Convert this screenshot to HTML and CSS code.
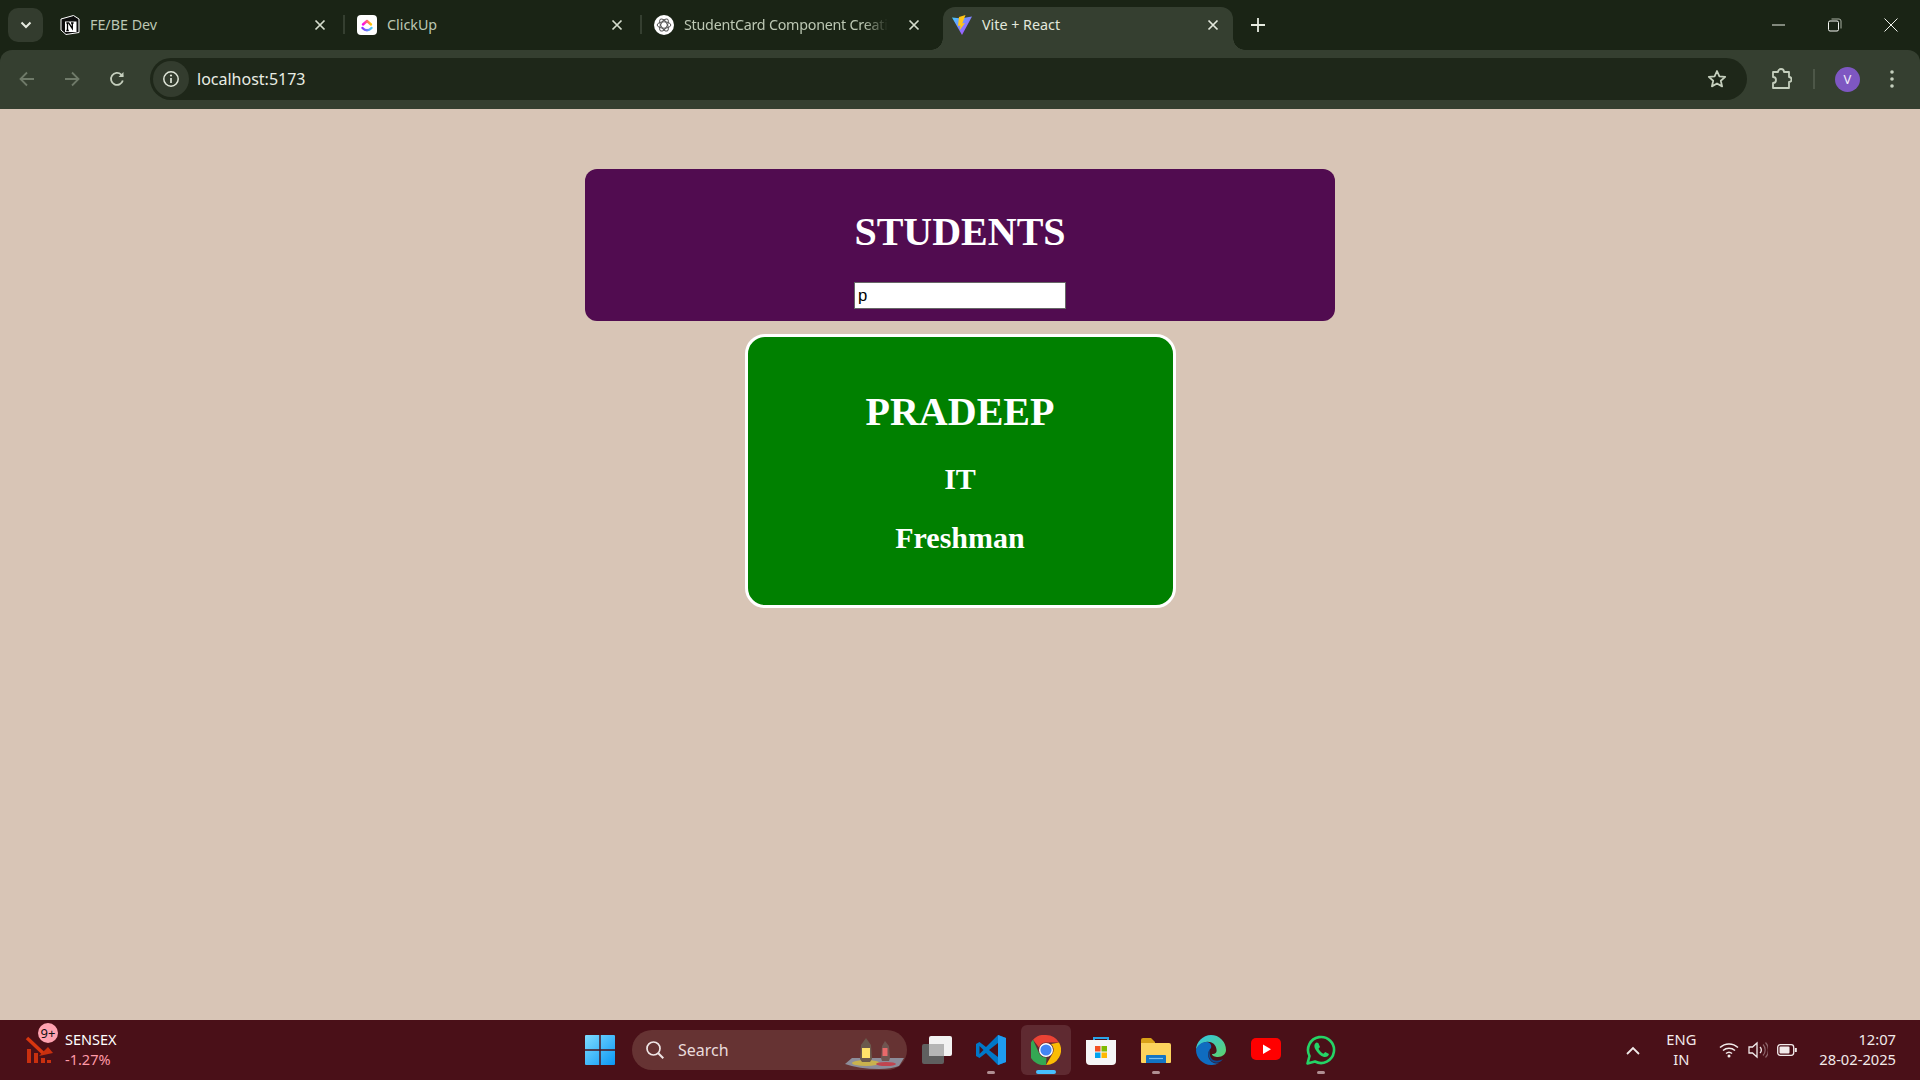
FILE: index.html
```html
<!DOCTYPE html>
<html lang="en">
<head>
<meta charset="utf-8">
<title>Vite + React</title>
<link rel="stylesheet" href="styles.css">
</head>
<body>
<div class="screen">
  <div class="tabstrip">
    <button class="tab-menu"><svg width="12" height="8" viewBox="0 0 12 8"><path d="M1.500 1.500 6 6l4.500-4.500" fill="none" stroke="#e6ebe0" stroke-width="2"/></svg></button>
    <div class="tab">
      <svg class="fav" viewBox="0 0 20 20"><path d="M1 4 13.500.5 19 4v13.500L6 19.500 1 15z" fill="#0c0c0c" stroke="#fff" stroke-width="1"/><path d="M5 6.500h11.500V17H5z" fill="#fff"/><path d="M7.500 15.500v-7.500h1.200l3.600 5.500V8M6.300 8h2.500M11 8h2.600M6.300 15.500h2.500" fill="none" stroke="#000" stroke-width="1.300"/></svg>
      <span class="tab-title">FE/BE Dev</span>
      <svg class="x" viewBox="0 0 12 12"><path d="M1.500 1.500l9 9m0-9l-9 9" stroke="#d5dccd" stroke-width="1.700"/></svg>
    </div>
    <i class="tab-sep"></i>
    <div class="tab">
      <svg class="fav" viewBox="0 0 20 20"><defs><linearGradient id="cu1" x1="0" y1="0" x2="1" y2="0"><stop offset="0" stop-color="#ff02f0"/><stop offset="1" stop-color="#ffc800"/></linearGradient><linearGradient id="cu2" x1="0" y1="0" x2="1" y2="0"><stop offset="0" stop-color="#8930fd"/><stop offset="1" stop-color="#49ccf9"/></linearGradient></defs><rect width="20" height="20" rx="4" fill="#fff"/><path d="M6 9.500 10 6l4 3.500" fill="none" stroke="url(#cu1)" stroke-width="2.400" stroke-linecap="round" stroke-linejoin="round"/><path d="M5.500 13c2.800 3 6.200 3 9 0" fill="none" stroke="url(#cu2)" stroke-width="2.400" stroke-linecap="round"/></svg>
      <span class="tab-title">ClickUp</span>
      <svg class="x" viewBox="0 0 12 12"><path d="M1.500 1.500l9 9m0-9l-9 9" stroke="#d5dccd" stroke-width="1.700"/></svg>
    </div>
    <i class="tab-sep"></i>
    <div class="tab">
      <svg class="fav" viewBox="0 0 20 20"><circle cx="10" cy="10" r="10" fill="#fff"/><g fill="none" stroke="#555" stroke-width="1"><ellipse cx="10" cy="10" rx="6.800" ry="3.200"/><ellipse cx="10" cy="10" rx="6.800" ry="3.200" transform="rotate(60 10 10)"/><ellipse cx="10" cy="10" rx="6.800" ry="3.200" transform="rotate(120 10 10)"/></g></svg>
      <span class="tab-title tab-fade">StudentCard Component Creati</span>
      <svg class="x" viewBox="0 0 12 12"><path d="M1.500 1.500l9 9m0-9l-9 9" stroke="#d5dccd" stroke-width="1.700"/></svg>
    </div>
    <div class="tab tab-active">
      <svg class="fav" viewBox="0 0 20 20"><defs><linearGradient id="vg" x1="0" y1="0" x2="1" y2="1"><stop offset="0" stop-color="#41d1ff"/><stop offset="1" stop-color="#bd34fe"/></linearGradient></defs><path d="M0 2.500 10 20 20 1.500l-6 1-4 1z" fill="url(#vg)"/><path d="M13.500 0 7 2l-1 9 2.500-.5-.7 4.500L13 8l-2.700.5z" fill="#ffc517"/></svg>
      <span class="tab-title tab-title-on">Vite + React</span>
      <svg class="x" viewBox="0 0 12 12"><path d="M1.500 1.500l9 9m0-9l-9 9" stroke="#e3e8dc" stroke-width="1.700"/></svg>
    </div>
    <svg class="plus" viewBox="0 0 14 14"><path d="M7 0v14M0 7h14" stroke="#e6ebe0" stroke-width="1.800"/></svg>
    <div class="win-controls">
      <svg class="win-btn" viewBox="0 0 14 14"><path d="M0 7h13" stroke="#e8ece4" stroke-width="1"/></svg>
      <svg class="win-btn" viewBox="0 0 14 14"><rect x=".5" y="3" width="10" height="10" rx="1.500" fill="none" stroke="#f4f6f2" stroke-width="1"/><path d="M3.500 1h7.500a2 2 0 0 1 2 2v7.500" fill="none" stroke="#a9b0a4" stroke-width="1"/></svg>
      <svg class="win-btn" viewBox="0 0 14 14"><path d="M.5.500l13 13m0-13l-13 13" stroke="#f0f3ec" stroke-width="1"/></svg>
    </div>
  </div>

  <div class="toolbar">
    <button class="tool"><svg width="18" height="18" viewBox="0 0 18 18"><path d="M16 9H2.500M9 2.500 2.500 9 9 15.500" fill="none" stroke="#6f7a69" stroke-width="1.800"/></svg></button>
    <button class="tool"><svg width="18" height="18" viewBox="0 0 18 18"><path d="M2 9h13.500M9 2.500 15.500 9 9 15.500" fill="none" stroke="#6f7a69" stroke-width="1.800"/></svg></button>
    <button class="tool"><svg width="18" height="18" viewBox="0 0 18 18"><path d="M14.800 10.500A6 6 0 1 1 13.200 4.600L15 6.500" fill="none" stroke="#c5cfbd" stroke-width="1.800"/><path d="M15.500 2v5h-5z" fill="#c5cfbd"/></svg></button>
    <div class="omnibox">
      <span class="site-info"><svg width="18" height="18" viewBox="0 0 18 18"><circle cx="9" cy="9" r="7.200" fill="none" stroke="#dfe5d8" stroke-width="1.500"/><path d="M9 8v5" stroke="#dfe5d8" stroke-width="1.700"/><circle cx="9" cy="5.500" r="1.100" fill="#dfe5d8"/></svg></span>
      <span class="url">localhost:5173</span>
      <button class="tool tool-star"><svg width="20" height="20" viewBox="0 0 20 20"><path d="m10 2 2.400 5.300 5.800.6-4.400 3.800 1.300 5.700L10 14.500l-5.100 2.900 1.300-5.700L1.800 7.900l5.800-.6z" fill="none" stroke="#c5cfbd" stroke-width="1.800" stroke-linejoin="round"/></svg></button>
    </div>
    <button class="tool tool-ext"><svg width="22" height="22" viewBox="0 0 22 22"><path d="M3 4h5a3 3 0 0 1 6 0h5v5a2.500 2.500 0 0 1 0 5v6H3v-5a3 3 0 0 0 0-6z" fill="none" stroke="#c5cfbd" stroke-width="1.800" stroke-linejoin="round"/></svg></button>
    <i class="tool-sep"></i>
    <span class="avatar">V</span>
    <button class="tool tool-more"><svg width="6" height="20" viewBox="0 0 6 20"><circle cx="3" cy="3" r="1.800" fill="#c5cfbd"/><circle cx="3" cy="10" r="1.800" fill="#c5cfbd"/><circle cx="3" cy="17" r="1.800" fill="#c5cfbd"/></svg></button>
  </div>

  <main class="page">
    <header class="students-head">
      <h1 class="heading">STUDENTS</h1>
      <input class="search-input" type="text" value="p">
    </header>
    <section class="student-card">
      <h1 class="heading">PRADEEP</h1>
      <h2 class="subhead subhead-dept">IT</h2>
      <h2 class="subhead subhead-year">Freshman</h2>
    </section>
  </main>

  <footer class="taskbar">
    <div class="widget">
      <span class="widget-icon">
        <svg width="30" height="30" viewBox="0 0 30 30"><path d="M2 14h4v14H2zM9 18h4v10H9zM16 23h4v5h-4zM22 25h4v3h-4z" fill="#c9300f"/><path d="M2 3 18 18" stroke="#d8360f" stroke-width="3.500" fill="none"/><path d="M14 21l14-3-5-6z" fill="#c9300f"/></svg>
        <span class="badge">9+</span>
      </span>
      <span class="widget-text"><span class="widget-name">SENSEX</span><span class="widget-val">-1.27%</span></span>
    </div>
    <div class="task-center">
      <svg class="ticon" viewBox="0 0 29 29"><defs><linearGradient id="wg" x1="0" y1="0" x2="1" y2="1"><stop offset="0" stop-color="#7fdcff"/><stop offset="1" stop-color="#0a97f5"/></linearGradient></defs><path d="M1 0h12.800v13.800H0V1a1 1 0 0 1 1-1zM15.200 0H28a1 1 0 0 1 1 1v12.800H15.200zM0 15.200h13.800V29H1a1 1 0 0 1-1-1zM15.200 15.200H29V28a1 1 0 0 1-1 1H15.200z" fill="url(#wg)"/></svg>
      <div class="search-pill">
        <svg width="20" height="20" viewBox="0 0 20 20"><circle cx="8.500" cy="8.500" r="6.500" fill="none" stroke="#efe6e6" stroke-width="1.700"/><path d="m13.300 13.300 5 5" stroke="#efe6e6" stroke-width="2"/></svg>
        <span class="search-label">Search</span>
        <svg class="lanterns" width="60" height="32" viewBox="0 0 60 32"><path d="M0 26 7 20h52l-5 8q-8 3-20 3-20 0-34-5z" fill="#8d8d9a"/><ellipse cx="21" cy="25" rx="14" ry="3" fill="#c9b24e"/><ellipse cx="41" cy="26" rx="10" ry="2" fill="#c0444f"/><path d="M21 0l5 7 1 14-2 3h-8l-2-3 1-14z" fill="#6b5a4d"/><rect x="17" y="10" width="8" height="10" fill="#ffe36a"/><path d="M40 3l4 5 1 12-1 3h-7l-1-3 1-12z" fill="#6f5550"/><rect x="37.500" y="10" width="5" height="8" fill="#e8696a"/></svg>
      </div>
      <svg class="ticon tview" viewBox="0 0 30 28"><rect y="8" width="22" height="20" rx="2" fill="#5f5f5f"/><rect x="7" width="23" height="20" rx="2" fill="#f2f2f2"/><rect x="7" y="8" width="15" height="12" fill="#b5b5b5"/></svg>
      <div class="app">
        <svg class="ticon" viewBox="0 0 30 30"><path d="M22 0 10 12 3.500 7 0 9v12l3.500 2L10 18l12 12 8-3V3z" fill="#0078c8"/><path d="M22 0v30l8-3V3z" fill="#1f9cf0"/><path d="M22 8 13 15l9 7z" fill="#4a1018"/><path d="M3.500 11v8l4-4z" fill="#4a1018"/></svg>
        <i class="dot"></i>
      </div>
      <div class="app app-on">
        <svg class="ticon" viewBox="0 0 30 30"><path d="M15 0a15 15 0 0 1 13 7.500H15a7.500 7.500 0 0 0-7 5L2 4.800A15 15 0 0 1 15 0z" fill="#ea4335"/><path d="M28 7.500A15 15 0 0 1 15 30l6.500-11.300A7.500 7.500 0 0 0 20 9z" fill="#fbbc04"/><path d="M2 4.800 8.500 19a7.500 7.500 0 0 0 7 3.500L15 30A15 15 0 0 1 2 4.800z" fill="#34a853"/><circle cx="15" cy="15" r="7" fill="#fff"/><circle cx="15" cy="15" r="5.600" fill="#4285f4"/></svg>
        <i class="dot dot-on"></i>
      </div>
      <div class="app">
        <svg class="ticon" viewBox="0 0 30 30"><path d="M8 8V3h14v5" fill="none" stroke="#2aa4e8" stroke-width="2"/><path d="M0 5h30v21a4 4 0 0 1-4 4H4a4 4 0 0 1-4-4z" fill="#f6f6f6"/><path d="M9 11h5.500v5.500H9z" fill="#f25022"/><path d="M15.500 11H21v5.500h-5.500z" fill="#7fba00"/><path d="M9 17.500h5.500V23H9z" fill="#00a4ef"/><path d="M15.500 17.500H21V23h-5.500z" fill="#ffb900"/></svg>
      </div>
      <div class="app">
        <svg class="ticon" viewBox="0 0 30 30"><path d="M0 5a2 2 0 0 1 2-2h8l4 4v18H0z" fill="#d9a118"/><path d="M0 8h28a2 2 0 0 1 2 2v17a1 1 0 0 1-1 1H1a1 1 0 0 1-1-1z" fill="#fcd35d"/><path d="M5 21a1 1 0 0 1 1-1h18a1 1 0 0 1 1 1v7H5z" fill="#1274c4"/><path d="M8 23.500h14" stroke="#7cc0ef" stroke-width="1.200"/></svg>
        <i class="dot"></i>
      </div>
      <div class="app">
        <svg class="ticon" viewBox="0 0 30 30"><defs><linearGradient id="eg" x1="0" y1="0" x2="1" y2="1"><stop offset="0" stop-color="#2fc4e8"/><stop offset="1" stop-color="#5fd26a"/></linearGradient></defs><path d="M15 0a15 15 0 0 1 15 15c0 4-3.500 7-8 7-3 0-6-1-6-3 4 0 5-2 4.500-4.500C20 9 15 6 10 7 5 8 1 12 0 15 0 7 7 0 15 0z" fill="url(#eg)"/><path d="M0 15c1-5 6-8 10-8 4 0 6 3 5 6-3 3-4 8-1 12 2 3 6 4 9 3a15 15 0 0 1-8 2C7 30 0 23 0 15z" fill="#0f6cc0"/><path d="M14 14c-3 4-2 10 3 13 4 2 8 0 10-3-3 2-7 2-10 1-3-2-4-7-3-11z" fill="#0c4a94"/></svg>
      </div>
      <div class="app">
        <svg class="ticon" viewBox="0 0 30 30"><rect y="3" width="30" height="22" rx="5" fill="#f00"/><path d="M12 9.500v9.500l8-4.750z" fill="#fff"/></svg>
      </div>
      <div class="app">
        <svg class="ticon" viewBox="0 0 30 30"><path d="M1.500 28.500 3.500 21A13 13 0 1 1 9 26.500z" fill="none" stroke="#25d366" stroke-width="2.600" stroke-linejoin="round"/><path d="M10.500 7.500c-2 1-3 3.500-1 7s5 6.500 8.500 7.500c2.500.5 4.500-1 5-3l-3.800-2-1.700 1.800c-2-.8-4-2.800-5-5l1.500-1.700-1.700-4z" fill="#25d366"/></svg>
        <i class="dot"></i>
      </div>
    </div>
    <div class="tray">
      <svg class="tray-chev" width="14" height="9" viewBox="0 0 14 9"><path d="M1 8l6-6 6 6" fill="none" stroke="#f2eaea" stroke-width="1.800"/></svg>
      <span class="lang"><span>ENG</span><span>IN</span></span>
      <svg class="tray-icon" width="20" height="16" viewBox="0 0 20 16"><path d="M1 5.500a13 13 0 0 1 18 0M4 8.500a9 9 0 0 1 12 0M7 11.500a4.500 4.500 0 0 1 6 0" fill="none" stroke="#f2eaea" stroke-width="1.500"/><circle cx="10" cy="14" r="1.500" fill="#f2eaea"/></svg>
      <svg class="tray-icon" width="20" height="18" viewBox="0 0 20 18"><path d="M1 6h3.500L9 2v14l-4.500-4H1z" fill="none" stroke="#f2eaea" stroke-width="1.300"/><path d="M12 6a4 4 0 0 1 0 6" fill="none" stroke="#f2eaea" stroke-width="1.300"/><path d="M15 3.500a8 8 0 0 1 0 11M17.500 1.500a11 11 0 0 1 0 15" fill="none" stroke="#8c6469" stroke-width="1.200"/></svg>
      <svg class="tray-icon" width="20" height="12" viewBox="0 0 20 12"><rect x=".7" y=".7" width="16" height="10.600" rx="2.500" fill="none" stroke="#f2eaea" stroke-width="1.300"/><rect x="2.500" y="2.500" width="10" height="7" rx="1" fill="#f2eaea"/><rect x="17.800" y="4" width="2" height="4" fill="#f2eaea"/></svg>
      <span class="clock"><span>12:07</span><span>28-02-2025</span></span>
    </div>
  </footer>
</div>
</body>
</html>
```

FILE: styles.css
```css
* { box-sizing: border-box; }
html, body { margin: 0; height: 100%; }
body { overflow: hidden; font-family: "Noto Sans", sans-serif; }
button { border: 0; background: none; padding: 0; display: flex; align-items: center; justify-content: center; }
.screen { width: 1920px; height: 1080px; display: flex; flex-direction: column; background: #1a2415; }

/* tab strip */
.tabstrip { height: 50px; background: #1a2415; display: flex; align-items: flex-end; padding-left: 8px; }
.tab-menu { width: 35px; height: 34px; margin-bottom: 8px; border-radius: 10px; background: #333c2e; }
.tab { position: relative; width: 297px; height: 43px; display: flex; align-items: center; padding: 0 18px 7px 13px; flex: none; }
.tab:first-of-type { margin-left: 4px; }
.tab-sep { width: 2px; height: 19px; margin: 0 -1px 16px; background: #353f30; flex: none; }
.fav { width: 20px; height: 20px; flex: none; }
.tab-title { margin-left: 10px; font-size: 14.300px; line-height: 20px; color: #bcc7b3; white-space: nowrap; flex: 1; min-width: 0; }
.tab-fade { -webkit-mask-image: linear-gradient(90deg, #000 88%, transparent 100%); mask-image: linear-gradient(90deg, #000 88%, transparent 100%); flex: none; width: auto; letter-spacing: -.25px; }
.tab-fade + .x { margin-left: auto; }
.tab-title-on { color: #e3e8dc; }
.x { width: 12px; height: 12px; flex: none; }
.tab-active { width: 290px; margin-left: 5px; padding-left: 9px; padding-right: 14px; background: #353f30; border-radius: 12px 12px 0 0; }
.tab-active::before, .tab-active::after { content: ""; position: absolute; bottom: 0; width: 12px; height: 12px; background: radial-gradient(circle at var(--cx) 0, #1a2415 11.500px, #353f30 12px); }
.tab-active::before { left: -12px; --cx: 0; }
.tab-active::after { right: -12px; --cx: 12px; }
.plus { width: 14px; height: 14px; margin: 0 0 18px 18px; flex: none; }
.win-controls { margin-left: auto; height: 50px; display: flex; align-items: center; padding-right: 22px; gap: 42px; }
.win-btn { width: 14px; height: 14px; }

/* toolbar */
.toolbar { height: 59px; background: #353f30; border-radius: 12px 12px 0 0; display: flex; align-items: center; padding: 0 0 1px 9px; }
.tool { width: 36px; height: 36px; flex: none; }
.tool + .tool { margin-left: 9px; }
.omnibox { width: 1597px; height: 42px; margin-left: 15px; border-radius: 21px; background: #1e2719; display: flex; align-items: center; padding: 0 12px 0 3px; flex: none; }
.site-info { width: 36px; height: 36px; border-radius: 50%; background: #333c2e; display: flex; align-items: center; justify-content: center; flex: none; }
.url { margin-left: 8px; font-size: 16px; line-height: 22px; color: #e9ede4; flex: 1; }
.tool-ext { margin-left: 16px; }
.tool-sep { width: 2px; height: 20px; margin-left: 14px; background: #4d5748; flex: none; }
.avatar { width: 25px; height: 25px; margin-left: 20px; border-radius: 50%; background: #7e57c2; color: #f1ecf8; font-size: 13px; line-height: 25px; text-align: center; flex: none; }
.tool-more { margin-left: 14px; }

/* page */
.page { flex: 1; background: #d8c5b6; display: flex; flex-direction: column; align-items: center; padding-top: 60px; font-family: "Liberation Serif", serif; color: #fff; }
.students-head { width: 750px; height: 152px; background: #510c50; border-radius: 12px; display: flex; flex-direction: column; align-items: center; padding-top: 40px; }
.heading { margin: 0; font-size: 40px; line-height: 46px; font-weight: 700; }
.search-input { width: 212px; height: 27px; margin-top: 27px; padding: 0 3px; border: 1px solid #666; background: #fff; color: #000; font-family: "Liberation Sans", sans-serif; font-size: 16.670px; }
.student-card { width: 431px; height: 274px; margin-top: 13px; background: #008000; border: 3px solid #fff; border-radius: 20px; display: flex; flex-direction: column; align-items: center; padding-top: 52px; }
.subhead { margin: 0; font-size: 30px; line-height: 34px; font-weight: 700; }
.subhead-dept { margin-top: 27px; }
.subhead-year { margin-top: 25px; }

/* taskbar */
.taskbar { height: 60px; background: #4a1018; display: flex; align-items: center; color: #fff; }
.widget { width: 585px; display: flex; align-items: center; padding-left: 25px; flex: none; }
.widget-icon { position: relative; width: 30px; height: 30px; flex: none; }
.badge { position: absolute; left: 13px; top: -12px; width: 20px; height: 20px; border-radius: 50%; background: #ffa3b1; color: #111; font-size: 13px; line-height: 20px; text-align: center; }
.widget-text { margin-left: 10px; padding-bottom: 2px; display: flex; flex-direction: column; font-size: 14.500px; line-height: 20px; }
.widget-val { color: #ff9aa8; }
.task-center { display: flex; align-items: center; flex: none; }
.ticon { width: 30px; height: 30px; flex: none; display: block; }
.search-pill { position: relative; width: 275px; height: 40px; margin-left: 17px; border-radius: 20px; background: #663333; display: flex; align-items: center; padding-left: 13px; }
.search-label { margin-left: 13px; font-size: 16px; color: #eadcdc; }
.lanterns { position: absolute; right: 2px; top: 8px; }
.tview { margin-left: 15px; height: 28px; }
.app { position: relative; width: 50px; height: 50px; margin-left: 5px; display: flex; align-items: center; justify-content: center; border-radius: 6px; flex: none; }
.tview + .app { margin-left: 14px; }
.app-on { background: #5f2a31; }
.dot { position: absolute; left: 21px; bottom: 1px; width: 8px; height: 3px; border-radius: 2px; background: #b08f93; }
.dot-on { left: 15px; width: 20px; height: 4px; background: #47bfff; }
.tray { flex: 1; display: flex; align-items: center; justify-content: flex-end; padding-right: 24px; color: #f2eaea; }
.tray-chev { margin-right: 26px; flex: none; }
.lang, .clock { display: flex; flex-direction: column; padding-bottom: 2px; font-size: 14.700px; line-height: 20px; }
.lang { align-items: center; margin-right: 23px; }
.clock { align-items: flex-end; margin-left: 13px; }
.tray-icon { margin-right: 9px; flex: none; }
```
